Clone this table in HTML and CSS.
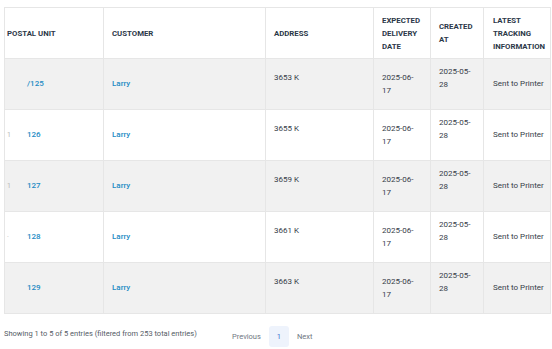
FILE: index.html
```html
<!DOCTYPE html>
<html lang="en">
<head>
    <meta charset="UTF-8">
    <meta name="viewport" content="width=device-width, initial-scale=1.0">
    <title>Postal Units</title>
    <link rel="stylesheet" href="styles.css">
</head>
<body>
    <div class="wrapper">
        <!-- Units table -->
        <table class="units-table">
            <colgroup>
                <col class="col-unit">
                <col class="col-customer">
                <col class="col-address">
                <col class="col-expected">
                <col class="col-created">
                <col class="col-tracking">
            </colgroup>
            <thead>
                <tr>
                    <th class="first">POSTAL UNIT</th>
                    <th>CUSTOMER</th>
                    <th>ADDRESS</th>
                    <th>EXPECTED DELIVERY DATE</th>
                    <th>CREATED AT</th>
                    <th class="last">LATEST TRACKING INFORMATION</th>
                </tr>
            </thead>
            <tbody>
                <tr>
                    <td class="first"><span class="faint"></span><a href="#" class="unit">/125</a></td>
                    <td><a href="#">Larry</a></td>
                    <td><div class="addr">3653 K</div><div class="addr-blank"></div></td>
                    <td>2025-06-<br>17</td>
                    <td class="created">2025-05-<br>28<div class="blank-line"></div></td>
                    <td class="last">Sent to Printer</td>
                </tr>
                <tr>
                    <td class="first"><span class="faint">1</span><a href="#" class="unit">126</a></td>
                    <td><a href="#">Larry</a></td>
                    <td><div class="addr">3655 K</div><div class="addr-blank"></div></td>
                    <td>2025-06-<br>17</td>
                    <td class="created">2025-05-<br>28<div class="blank-line"></div></td>
                    <td class="last">Sent to Printer</td>
                </tr>
                <tr>
                    <td class="first"><span class="faint">1</span><a href="#" class="unit">127</a></td>
                    <td><a href="#">Larry</a></td>
                    <td><div class="addr">3659 K</div><div class="addr-blank"></div></td>
                    <td>2025-06-<br>17</td>
                    <td class="created">2025-05-<br>28<div class="blank-line"></div></td>
                    <td class="last">Sent to Printer</td>
                </tr>
                <tr>
                    <td class="first"><span class="faint">·</span><a href="#" class="unit">128</a></td>
                    <td><a href="#">Larry</a></td>
                    <td><div class="addr">3661 K</div><div class="addr-blank"></div></td>
                    <td>2025-06-<br>17</td>
                    <td class="created">2025-05-<br>28<div class="blank-line"></div></td>
                    <td class="last">Sent to Printer</td>
                </tr>
                <tr>
                    <td class="first"><span class="faint"></span><a href="#" class="unit">129</a></td>
                    <td><a href="#">Larry</a></td>
                    <td><div class="addr">3663 K</div><div class="addr-blank"></div></td>
                    <td>2025-06-<br>17</td>
                    <td class="created">2025-05-<br>28<div class="blank-line"></div></td>
                    <td class="last">Sent to Printer</td>
                </tr>
            </tbody>
        </table>

        <!-- Footer info and pagination -->
        <div class="table-footer">
            <div class="info">Showing 1 to 5 of 5 entries (filtered from 253 total entries)</div>
            <div class="pagination">
                <a href="#" class="page-link">Previous</a>
                <a href="#" class="page-link current">1</a>
                <a href="#" class="page-link">Next</a>
            </div>
        </div>
    </div>
</body>
</html>
```

FILE: styles.css
```css
body {
    margin: 0;
    font-family: Roboto, "Noto Sans", sans-serif;
    background-color: #fff;
    color: #363c48;
}
.wrapper {
    padding: 7px 2px 0 4px;
}
.units-table {
    width: 546px;
    table-layout: fixed;
    border-collapse: collapse;
    font-size: 8px;
}
.col-unit { width: 99px; }
.col-customer { width: 162px; }
.col-address { width: 108px; }
.col-expected { width: 57px; }
.col-created { width: 53px; }
.col-tracking { width: 67px; }

.units-table th, .units-table td {
    border: 1px solid #e6e6e6;
    padding: 0 8px;
    text-align: left;
    vertical-align: middle;
}
.units-table th {
    height: 50px;
    font-weight: 700;
    font-size: 7.8px;
    line-height: 13px;
    color: #2c3848;
    background-color: #fff;
}
.units-table th.first {
    padding-left: 2px;
}
.units-table .last {
    padding-left: 9px;
    padding-right: 0;
}
.units-table td.last {
    white-space: nowrap;
}
.units-table td {
    height: 50px;
    line-height: 13.5px;
}
.units-table tbody tr:nth-child(odd) td {
    background-color: #f1f1f1;
}
.units-table td.first {
    padding-left: 2px;
}
.units-table a {
    color: #1c8bc4;
    text-decoration: none;
    font-weight: 500;
}
.faint {
    display: inline-block;
    width: 20px;
    color: #b9b9b9;
    font-size: 7px;
}
.addr-blank {
    height: 13px;
}
.created {
    line-height: 12.5px;
}
.blank-line {
    height: 12px;
}

.table-footer {
    display: flex;
    align-items: center;
    padding-top: 12px;
    font-size: 7.5px;
}
.info {
    width: 228px;
    color: #555c66;
    margin-top: -6px;
}
.pagination {
    display: flex;
    align-items: center;
    gap: 8px;
}
.page-link {
    color: #6f7782;
    text-decoration: none;
    font-size: 7.5px;
}
.page-link.current {
    width: 20px;
    height: 21px;
    line-height: 21px;
    text-align: center;
    border-radius: 3px;
    background-color: #eef3fc;
    color: #3e6fcf;
}
```
